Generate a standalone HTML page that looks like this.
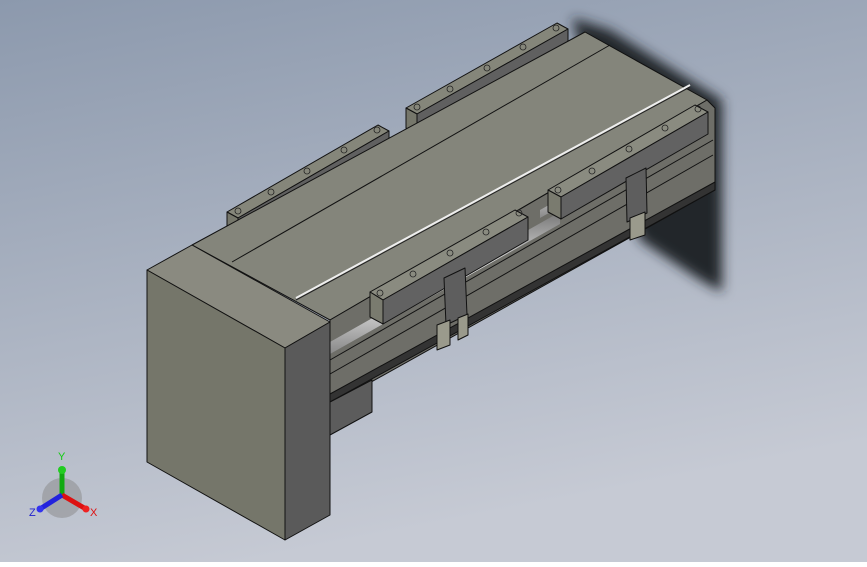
<!DOCTYPE html><html><head><style>html,body{margin:0;padding:0}body{width:867px;height:562px;overflow:hidden}</style></head><body>
<svg width="867" height="562" viewBox="0 0 867 562" xmlns="http://www.w3.org/2000/svg">
<defs>
<linearGradient id="bg" x1="0" y1="0" x2="0.3" y2="1"><stop offset="0" stop-color="#8c99ad"/><stop offset="1" stop-color="#c6cad4"/></linearGradient>
<filter id="bl"><feGaussianBlur stdDeviation="6"/></filter>
<linearGradient id="rod" x1="0" y1="0" x2="0" y2="1"><stop offset="0" stop-color="#777"/><stop offset="0.5" stop-color="#fff"/><stop offset="1" stop-color="#888"/></linearGradient>
</defs>
<rect width="867" height="562" fill="url(#bg)"/>
<polygon points="572,18 610,30 722,100 722,292 700,280 640,240" fill="#23262b" filter="url(#bl)"/>
<g stroke="#111" stroke-width="1" stroke-linejoin="round">
<polygon points="227,212 378,125 389,131 238,218" fill="#85867a"/>
<polygon points="238,218 389,131 389,152 238,240" fill="#606060"/>
<polygon points="227,212 238,218 238,240 227,234" fill="#76776b"/>
<polygon points="406,108 557,23 568,29 417,114" fill="#85867a"/>
<polygon points="417,114 568,29 568,48 417,134" fill="#606060"/>
<polygon points="406,108 417,114 417,134 406,128" fill="#76776b"/>
<polygon points="192,245 585,32 707,100 330,320" fill="#84857b"/>
<line x1="232" y1="262" x2="610" y2="45"/>
<line x1="296" y1="298" x2="690" y2="85" stroke="#eee" stroke-width="2"/>
<line x1="296" y1="300" x2="690" y2="87" stroke="#222"/>
<polygon points="330,320 707,100 715,108 715,190 330,405" fill="#6e6e68"/>
<polygon points="330,342 560,212 560,224 330,354" fill="url(#rod)" stroke="none"/>
<polygon points="540,210 690,125 690,133 540,218" fill="url(#rod)" stroke="none"/>
<line x1="330" y1="360" x2="713" y2="140"/>
<line x1="330" y1="374" x2="713" y2="155"/>
<polygon points="330,394 715,182 715,190 330,402" fill="#333"/>
<polygon points="330,402 372,380 372,412 330,435" fill="#5c5c5c"/>
<polygon points="370,292 515,210 528,217 383,300" fill="#8a8b80"/>
<polygon points="383,300 528,217 528,240 383,324" fill="#626262"/>
<polygon points="370,292 383,300 383,324 370,317" fill="#7a7b6f"/>
<polygon points="548,190 695,105 708,112 561,197" fill="#8a8b80"/>
<polygon points="561,197 708,112 708,134 561,219" fill="#626262"/>
<polygon points="548,190 561,197 561,219 548,212" fill="#7a7b6f"/>
<polygon points="444,278 465,268 467,315 446,325" fill="#5e5e5e"/>
<polygon points="437,325 450,320 450,345 437,350" fill="#9a9a8c"/>
<polygon points="458,318 468,314 468,335 458,340" fill="#9a9a8c"/>
<polygon points="626,178 646,168 647,213 627,222" fill="#5e5e5e"/>
<polygon points="630,218 645,212 645,235 630,240" fill="#9a9a8c"/>
<polygon points="147,270 192,245 330,322 285,348" fill="#8a8a80"/>
<polygon points="147,270 285,348 285,540 147,462" fill="#75766a"/>
<polygon points="285,348 330,322 330,515 285,540" fill="#5a5a5a"/>
</g>
<g fill="none" stroke="#222" stroke-width="0.8">
<circle cx="238" cy="211" r="3"/><circle cx="271" cy="192" r="3"/><circle cx="307" cy="171" r="3"/><circle cx="344" cy="150" r="3"/><circle cx="377" cy="130" r="3"/>
<circle cx="417" cy="107" r="3"/><circle cx="450" cy="89" r="3"/><circle cx="487" cy="68" r="3"/><circle cx="523" cy="47" r="3"/><circle cx="556" cy="28" r="3"/>
<circle cx="380" cy="293" r="3"/><circle cx="413" cy="274" r="3"/><circle cx="450" cy="253" r="3"/><circle cx="486" cy="232" r="3"/><circle cx="519" cy="213" r="3"/>
<circle cx="558" cy="190" r="3"/><circle cx="592" cy="171" r="3"/><circle cx="629" cy="149" r="3"/><circle cx="665" cy="128" r="3"/><circle cx="698" cy="109" r="3"/>
</g>
<g>
<circle cx="62" cy="498" r="20" fill="#888" opacity="0.5"/>
<line x1="62" y1="495" x2="62" y2="470" stroke="#1a1" stroke-width="5"/>
<circle cx="62" cy="470" r="4" fill="#2c2"/>
<line x1="62" y1="495" x2="86" y2="509" stroke="#d11" stroke-width="5"/>
<circle cx="86" cy="509" r="3.5" fill="#e22"/>
<line x1="62" y1="495" x2="40" y2="509" stroke="#22d" stroke-width="5"/>
<circle cx="40" cy="509" r="3.5" fill="#33e"/>
<text x="58" y="460" font-family="Liberation Sans,sans-serif" font-size="11" fill="#1c1">Y</text>
<text x="90" y="516" font-family="Liberation Sans,sans-serif" font-size="11" fill="#d11">X</text>
<text x="29" y="516" font-family="Liberation Sans,sans-serif" font-size="11" fill="#22c">Z</text>
</g>
</svg>
</body></html>
